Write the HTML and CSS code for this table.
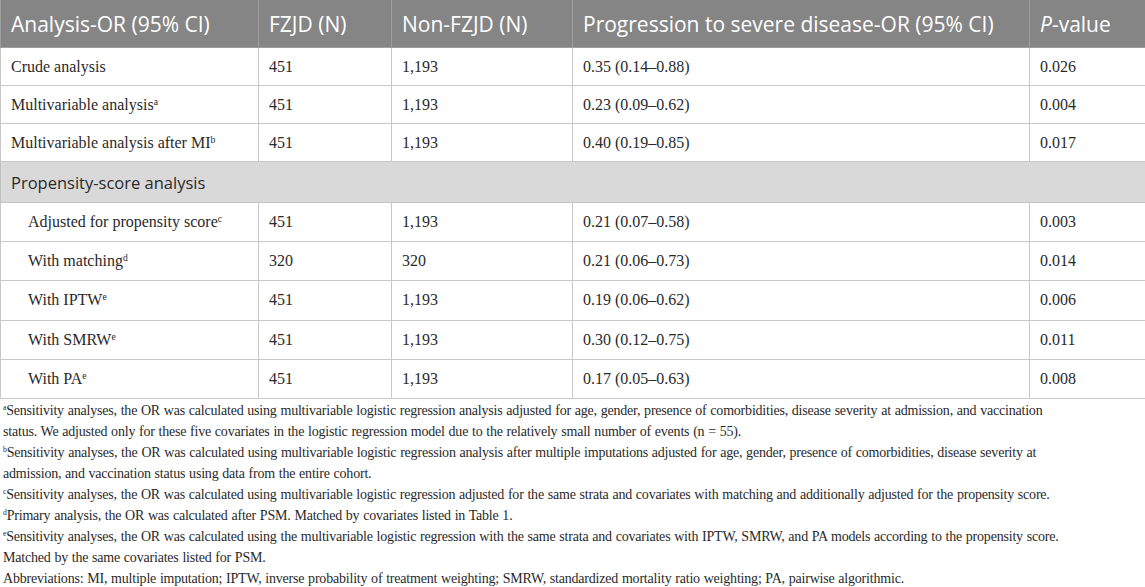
FILE: index.html
```html
<!DOCTYPE html>
<html lang="en">
<head>
  <meta charset="UTF-8">
  <meta name="viewport" content="width=device-width, initial-scale=1.0">
  <title>Table 3</title>
  <link rel="stylesheet" href="styles.css">
</head>
<body>
  <table class="or-table">
    <colgroup>
      <col class="c1"><col class="c2"><col class="c3"><col class="c4"><col class="c5">
    </colgroup>
    <thead>
      <tr>
        <th>Analysis-OR (95% CI)</th>
        <th>FZJD (N)</th>
        <th>Non-FZJD (N)</th>
        <th>Progression to severe disease-OR (95% CI)</th>
        <th><i>P</i>-value</th>
      </tr>
    </thead>
    <tbody>
      <tr>
        <td>Crude analysis</td><td>451</td><td>1,193</td><td>0.35 (0.14–0.88)</td><td>0.026</td>
      </tr>
      <tr>
        <td>Multivariable analysis<sup>a</sup></td><td>451</td><td>1,193</td><td>0.23 (0.09–0.62)</td><td>0.004</td>
      </tr>
      <tr>
        <td>Multivariable analysis after MI<sup>b</sup></td><td>451</td><td>1,193</td><td>0.40 (0.19–0.85)</td><td>0.017</td>
      </tr>
      <tr class="section">
        <td colspan="5">Propensity-score analysis</td>
      </tr>
      <tr class="sub">
        <td class="indent">Adjusted for propensity score<sup>c</sup></td><td>451</td><td>1,193</td><td>0.21 (0.07–0.58)</td><td>0.003</td>
      </tr>
      <tr class="sub">
        <td class="indent">With matching<sup>d</sup></td><td>320</td><td>320</td><td>0.21 (0.06–0.73)</td><td>0.014</td>
      </tr>
      <tr class="sub">
        <td class="indent">With IPTW<sup>e</sup></td><td>451</td><td>1,193</td><td>0.19 (0.06–0.62)</td><td>0.006</td>
      </tr>
      <tr class="sub">
        <td class="indent">With SMRW<sup>e</sup></td><td>451</td><td>1,193</td><td>0.30 (0.12–0.75)</td><td>0.011</td>
      </tr>
      <tr class="sub">
        <td class="indent">With PA<sup>e</sup></td><td>451</td><td>1,193</td><td>0.17 (0.05–0.63)</td><td>0.008</td>
      </tr>
    </tbody>
  </table>
  <div class="notes">
    <p><sup>a</sup>Sensitivity analyses, the OR was calculated using multivariable logistic regression analysis adjusted for age, gender, presence of comorbidities, disease severity at admission, and vaccination<br>status. We adjusted only for these five covariates in the logistic regression model due to the relatively small number of events (n = 55).</p>
    <p><sup>b</sup>Sensitivity analyses, the OR was calculated using multivariable logistic regression analysis after multiple imputations adjusted for age, gender, presence of comorbidities, disease severity at<br>admission, and vaccination status using data from the entire cohort.</p>
    <p><sup>c</sup>Sensitivity analyses, the OR was calculated using multivariable logistic regression adjusted for the same strata and covariates with matching and additionally adjusted for the propensity score.</p>
    <p><sup>d</sup>Primary analysis, the OR was calculated after PSM. Matched by covariates listed in Table 1.</p>
    <p><sup>e</sup>Sensitivity analyses, the OR was calculated using the multivariable logistic regression with the same strata and covariates with IPTW, SMRW, and PA models according to the propensity score.<br>Matched by the same covariates listed for PSM.</p>
    <p>Abbreviations: MI, multiple imputation; IPTW, inverse probability of treatment weighting; SMRW, standardized mortality ratio weighting; PA, pairwise algorithmic.</p>
  </div>
</body>
</html>
```

FILE: styles.css
```css
body {
  margin: 0;
  background: #fff;
  font-family: 'Liberation Serif', 'Times New Roman', serif;
  color: #2a2a2a;
}
.or-table {
  width: 1145px;
  border-collapse: collapse;
  table-layout: fixed;
}
.c1 { width: 258px; }
.c2 { width: 133px; }
.c3 { width: 181px; }
.c4 { width: 457px; }
.c5 { width: 116px; }
.or-table th {
  background: #858585;
  color: #fff;
  font-family: 'Open Sans', 'Noto Sans', sans-serif;
  font-size: 21px;
  font-weight: normal;
  text-align: left;
  height: 47px;
  padding: 0 10px;
  border: 1px solid #9c9c9c;
  border-top: none;
}
.or-table td {
  font-size: 16px;
  height: 37px;
  padding: 0 10px;
  border: 1px solid #c8c8c8;
  vertical-align: middle;
  color: #2a2a2a;
}
.or-table .sub td {
  height: 38.2px;
}
.or-table td.indent {
  padding-left: 27px;
}
.or-table .section td {
  background: #d9d9d9;
  font-family: 'Open Sans', 'Noto Sans', sans-serif;
  font-size: 16.5px;
  height: 40px;
  color: #2a2a2a;
  border-color: #c2c2c2;
}
sup {
  font-size: 0.6em;
  line-height: 0;
  vertical-align: 0.55em;
}
.notes {
  padding: 0 3px;
  margin-top: 1px;
}
.notes p {
  margin: 0;
  font-size: 14px;
  line-height: 21px;
  letter-spacing: -0.2px;
  word-spacing: 0.5px;
  white-space: nowrap;
  color: #2a2a2a;
}
.notes sup {
  font-size: 0.55em;
  vertical-align: 0.6em;
}
```
